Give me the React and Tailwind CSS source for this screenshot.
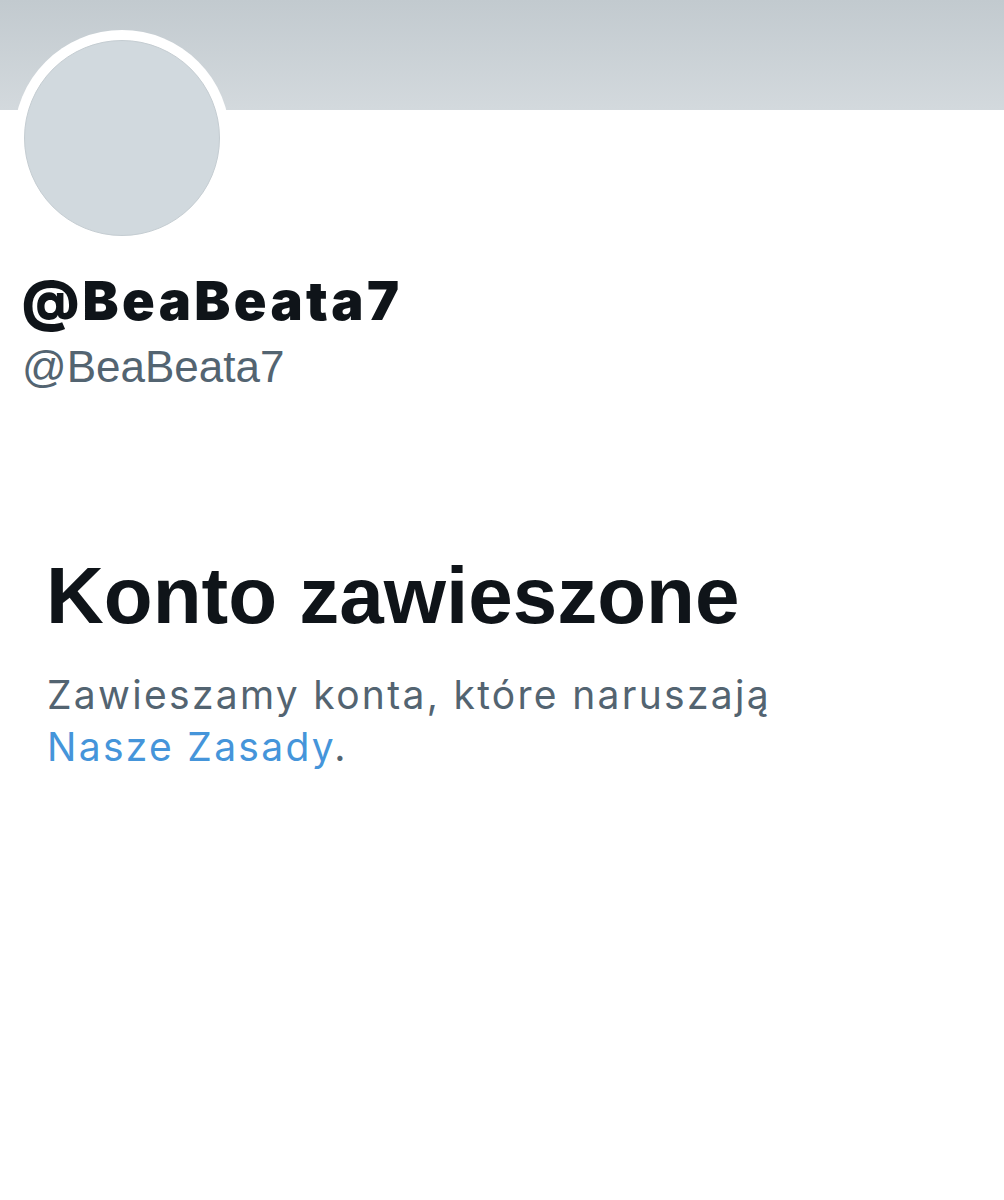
export default function App() {
  return (
    <div className="w-[1004px] h-[1200px] bg-white overflow-hidden" style={{ fontFamily: '"Liberation Sans", Arial, sans-serif' }}>
      <div className="h-[110px] bg-gradient-to-b from-[#c2cacf] to-[#d3d9dd]" />
      <div className="pl-[14px] -mt-[80px] relative">
        <div className="w-[216px] h-[216px] rounded-full bg-white p-[10px]">
          <div className="w-full h-full rounded-full bg-[#d1d9de] border border-[#c5cdd2]" />
        </div>
      </div>
      <div className="pl-[22px] mt-[28px]">
        <div className="text-[54px] leading-[54px] font-black text-[#0f1419] tracking-[3.4px]" style={{ fontFamily: 'Inter, sans-serif' }}>
          @BeaBeata7
        </div>
        <div className="mt-[17px] text-[44px] leading-none text-[#536471]">@BeaBeata7</div>
      </div>
      <div className="pl-[46px] mt-[167px]">
        <h1 className="text-[80px] leading-none font-bold text-[#0f1419]">Konto zawieszone</h1>
      </div>
      <div className="pl-[47px]">
        <p className="mt-[33px] text-[39px] leading-[52px] text-[#536471] tracking-[2.3px]" style={{ fontFamily: 'Inter, sans-serif' }}>
          Zawieszamy konta, które naruszają
          <br />
          <span className="text-[#4595da]">Nasze Zasady</span>.
        </p>
      </div>
    </div>
  );
}
